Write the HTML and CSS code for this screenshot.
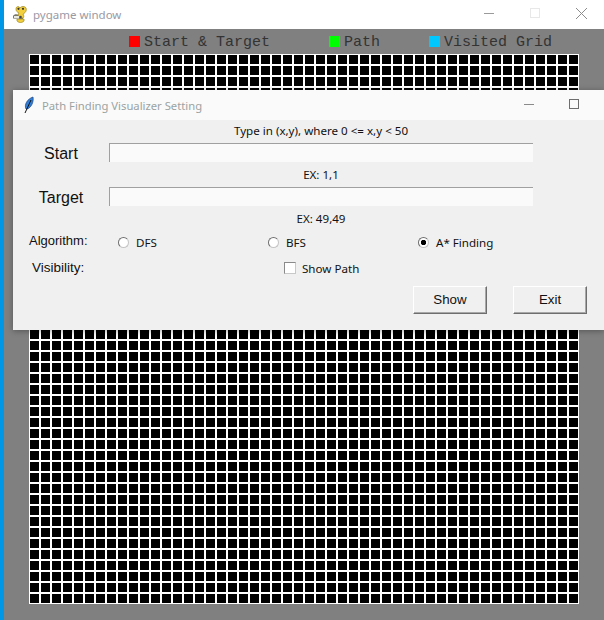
FILE: index.html
```html
<!DOCTYPE html>
<html lang="en">
<head>
<meta charset="utf-8">
<title>Path Finding Visualizer</title>
<link rel="stylesheet" href="styles.css">
</head>
<body>
<div class="desktop">
  <div class="pygame">
    <div class="titlebar">
      <svg class="snake" width="14" height="17" viewBox="0 0 14 17">
        <path d="M0 10 C1 8 4 8 6 9 L10 9 L10 13 L6 13 L2 13 C0 13 -.5 11 0 10Z" fill="#77776c"/>
        <path d="M3 3 C3 0 6 0 7 2 C8 0 12 0 13 2 C14 5 12 7 10 8 C11 10 11 11 10 12 L6 12 C5 10 5 8 6 7 C4 6 3 5 3 3Z" fill="#f2cf3d" stroke="#9a8420" stroke-width=".7"/>
        <path d="M4 13 H11 V15 C9 17 6 17 4 15Z" fill="#f2cf3d" stroke="#9a8420" stroke-width=".7"/>
        <circle cx="5.500" cy="2.800" r="1.100" fill="#333"/><circle cx="10" cy="2.800" r="1.100" fill="#333"/>
        <rect x="1" y="10" width="5" height="2.500" fill="#e8e8e0"/><circle cx="7.500" cy="11" r="1.300" fill="#444"/>
      </svg>
      <span class="title-text">pygame window</span>
      <div class="controls">
        <svg class="ctl" width="46" height="29" viewBox="0 0 46 29"><path d="M18 13.500H28" stroke="#9a9a9a"/></svg>
        <svg class="ctl" width="46" height="29" viewBox="0 0 46 29"><rect x="18.500" y="8.500" width="9" height="9" fill="none" stroke="#e8e8e8"/></svg>
        <svg class="ctl" width="46" height="29" viewBox="0 0 46 29"><path d="M18 8L29 19M29 8L18 19" stroke="#8c8c8c"/></svg>
      </div>
    </div>
    <div class="canvas">
      <div class="legend">
        <div class="legend-item item-start"><i class="swatch red"></i><span>Start &amp; Target</span></div>
        <div class="legend-item item-path"><i class="swatch green"></i><span>Path</span></div>
        <div class="legend-item"><i class="swatch cyan"></i><span>Visited Grid</span></div>
      </div>
      <div class="grid"></div>
    </div>
  </div>

  <div class="dialog">
    <div class="dialog-title">
      <svg class="feather" width="12" height="18" viewBox="0 0 12 18">
        <path d="M3 13 C1 9 4 3 10 1 C11 6 8 12 4 13Z" fill="#2f7fd8" stroke="#1b3f80" stroke-width=".7"/>
        <path d="M8 4 L2 17" stroke="#111" stroke-width="1"/>
      </svg>
      <span class="dialog-name">Path Finding Visualizer Setting</span>
      <div class="dialog-controls">
        <svg width="12" height="12" viewBox="0 0 12 12"><path d="M1 5.500H11" stroke="#8a8a8a"/></svg>
        <svg width="12" height="12" viewBox="0 0 12 12"><rect x="1.500" y=".5" width="9" height="9" fill="none" stroke="#6e6e6e"/></svg>
      </div>
    </div>
    <div class="dialog-body">
      <p class="hint hint-top">Type in (x,y), where 0 &lt;= x,y &lt; 50</p>
      <div class="field">
        <label class="field-label">Start</label>
        <div class="entry"></div>
      </div>
      <p class="hint hint-ex">EX: 1,1</p>
      <div class="field">
        <label class="field-label">Target</label>
        <div class="entry"></div>
      </div>
      <p class="hint hint-ex">EX: 49,49</p>
      <div class="option-row algo-row">
        <span class="opt-label">Algorithm:</span>
        <div class="opt opt-wide"><i class="radio"></i><span>DFS</span></div>
        <div class="opt opt-wide"><i class="radio"></i><span>BFS</span></div>
        <div class="opt opt-wide"><i class="radio checked"></i><span>A* Finding</span></div>
      </div>
      <div class="option-row vis-row">
        <span class="opt-label vis-label">Visibility:</span>
        <div class="opt opt-check"><i class="check"></i><span>Show Path</span></div>
      </div>
      <div class="buttons">
        <div class="btn">Show</div>
        <div class="btn">Exit</div>
      </div>
    </div>
  </div>
</div>
</body>
</html>
```

FILE: styles.css
```css
html, body { margin: 0; padding: 0; }
body { width: 604px; height: 620px; overflow: hidden; background: #808080; }
.desktop { position: relative; width: 604px; height: 620px; overflow: hidden; border-left: 4px solid #0097e6; box-sizing: border-box; }

.pygame { width: 600px; height: 620px; display: flex; flex-direction: column; }
.titlebar { height: 29px; flex: none; background: #fff; display: flex; align-items: center; padding-left: 9px; }
.snake { margin-right: 6px; flex: none; }
.title-text { font: 11.5px "Noto Sans", sans-serif; color: #9a9aa4; }
.controls { margin-left: auto; display: flex; }
.ctl { display: block; }

.canvas { flex: 1; background: #808080; padding-left: 25px; }
.legend { height: 25px; display: flex; padding-left: 100px; padding-top: 7px; box-sizing: border-box; }
.legend-item { display: flex; height: 11px; align-items: center; font: 15px/11px "Liberation Mono", monospace; color: #333; }
.legend-item span { margin-left: 4px; margin-top: 2px; }
.item-start { width: 200px; }
.item-path { width: 100px; }
.swatch { display: block; width: 11px; height: 11px; flex: none; }
.red { background: #ff0000; }
.green { background: #00ff00; }
.cyan { background: #00c8ff; }

.grid {
  width: 550px; height: 550px;
  background-color: #000;
  background-image:
    linear-gradient(to right, #fff 2px, transparent 2px),
    linear-gradient(to bottom, #fff 2px, transparent 2px);
  background-size: 11px 11px;
  background-position: -1px -1px;
}

.dialog { position: absolute; left: 9px; top: 90px; width: 591px; height: 240px; background: #f0f0f0; box-shadow: 0 1px 6px rgba(0,0,0,.35); display: flex; flex-direction: column; }
.dialog-title { height: 30px; flex: none; background: #fafafa; display: flex; align-items: center; padding-left: 10px; }
.feather { flex: none; margin-right: 7px; }
.dialog-name { font: 11.25px "Noto Sans", sans-serif; color: #9aa3a3; }
.dialog-controls { margin-left: auto; display: flex; gap: 33px; padding-right: 24px; }
.dialog-controls svg { display: block; }

.dialog-body { flex: 1; display: flex; flex-direction: column; font: 11.6px "Noto Sans", sans-serif; color: #111; }
.hint { margin: 0; text-align: center; line-height: 16px; width: 616px; }
.hint-top { height: 23px; padding-top: 3px; box-sizing: border-box; }
.hint-ex { height: 25px; padding-top: 5px; box-sizing: border-box; }
.field { display: flex; height: 19px; align-items: center; }
.field-label { width: 96px; margin-top: 2px; text-align: center; font: 16px "Liberation Sans", sans-serif; color: #111; }
.entry { width: 424px; height: 19px; box-sizing: border-box; background: #fafafa; border-top: 1px solid #a0a0a0; border-left: 1px solid #a0a0a0; }

.option-row { display: flex; align-items: center; }
.algo-row { height: 22px; }
.vis-row { height: 30px; margin-bottom: 2px; }
.opt-label { width: 87px; padding-left: 16px; margin-bottom: 4px; box-sizing: border-box; font: 13px "Liberation Sans", sans-serif; flex: none; }
.vis-label { padding-left: 19px; width: 271px; margin-bottom: 2px; font-size: 13.5px; }
.opt { display: flex; align-items: center; gap: 7px; }
.opt-wide { width: 150px; padding-left: 18px; box-sizing: border-box; }
.opt-check { gap: 6px; }
.radio { display: block; width: 11px; height: 11px; box-sizing: border-box; border-radius: 50%; background: #fff; border: 1px solid #c4c4c4; border-top-color: #6e6e6e; border-left-color: #6e6e6e; }
.radio.checked { background: radial-gradient(circle, #000 2.4px, #fff 3px); }
.check { display: block; width: 12px; height: 12px; box-sizing: border-box; background: #fff; border: 1px solid #8a8a8a; border-right-color: #c8c8c8; border-bottom-color: #c8c8c8; }

.buttons { display: flex; justify-content: flex-end; gap: 26px; padding-right: 17px; margin-top: 1px; }
.btn { width: 74px; height: 28px; padding-bottom: 2px; box-sizing: border-box; display: flex; align-items: center; justify-content: center; font: 13.3px "Liberation Sans", sans-serif; color: #111; background: #f0f0f0; border: 1px solid #fff; border-right-color: #6e6e6e; border-bottom-color: #6e6e6e; box-shadow: inset -1px -1px 0 #a8a8a8; }
```
